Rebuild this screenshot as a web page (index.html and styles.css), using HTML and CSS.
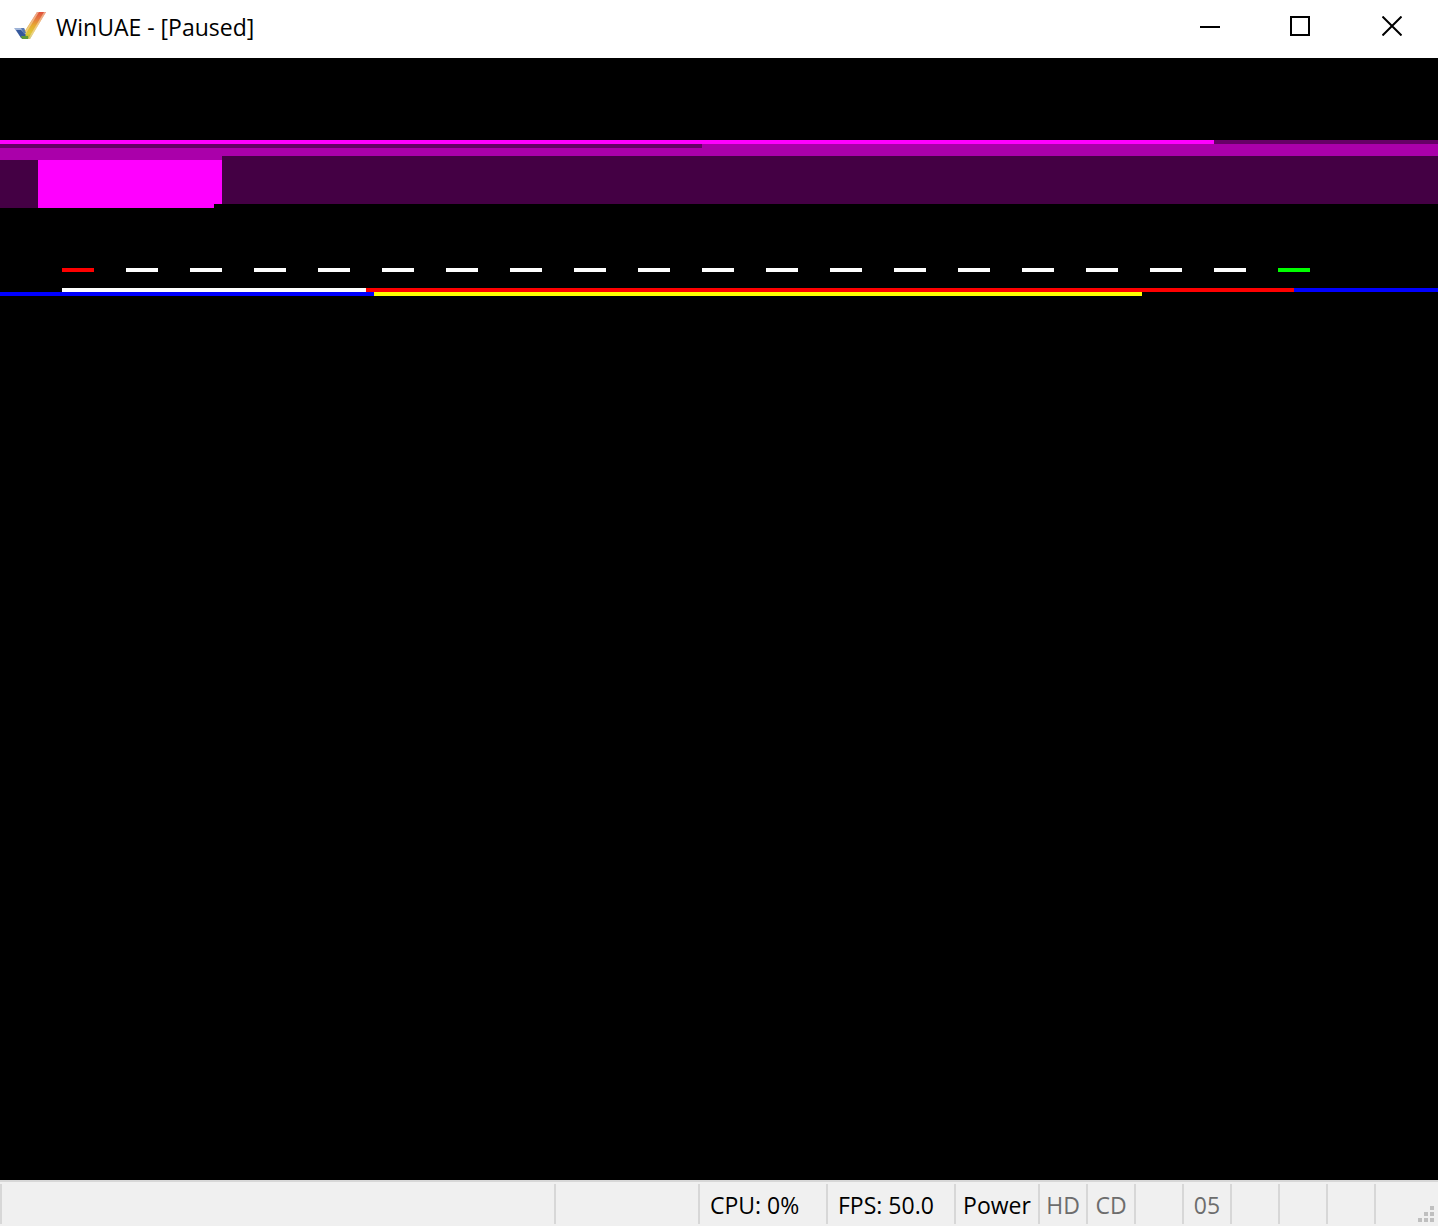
FILE: index.html
```html
<!DOCTYPE html>
<html lang="en">
<head>
<meta charset="utf-8">
<meta name="viewport" content="width=device-width, initial-scale=1">
<title>WinUAE - [Paused]</title>
<link rel="stylesheet" href="styles.css">
</head>
<body>
<div class="window">
  <header class="titlebar">
    <svg class="app-icon" width="32" height="32" viewBox="0 0 32 32" aria-hidden="true">
      <defs>
        <linearGradient id="arm" x1="0" y1="0" x2="0" y2="1">
          <stop offset="0" stop-color="#e0503c"/>
          <stop offset=".25" stop-color="#e47840"/>
          <stop offset=".5" stop-color="#e6aa30"/>
          <stop offset=".8" stop-color="#dcc838"/>
          <stop offset="1" stop-color="#a8b030"/>
        </linearGradient>
      </defs>
      <path fill="#9db2d6" d="M0 17h10l3 5-5 6z"/>
      <path fill="url(#arm)" d="M23 1h9L16 28H9V23z"/>
      <path fill="#f6d9b4" fill-opacity=".6" d="M30 1h2L16 28h-2zM23 1h2L11 24H9z"/>
      <path fill="#35589c" d="M2 19h5l5 5-3 3H7z"/>
      <path fill="#5878b0" d="M7 17h3l2 5-2 1z"/>
      <path fill="#5d9a38" d="M7 25h7v3H8z"/>
    </svg>
    <h1 class="title">WinUAE - [Paused]</h1>
    <div class="controls">
      <button class="control" type="button" aria-label="Minimize">
        <svg width="24" height="20" viewBox="0 0 24 20"><path fill="currentColor" d="M4 10h20v2H4z"/></svg>
      </button>
      <button class="control" type="button" aria-label="Maximize">
        <svg width="20" height="20" viewBox="0 0 20 20"><path fill="none" stroke="currentColor" stroke-width="2" d="M1 1h18v18H1z"/></svg>
      </button>
      <button class="control" type="button" aria-label="Close">
        <svg width="20" height="20" viewBox="0 0 20 20"><path fill="none" stroke="currentColor" stroke-width="2" d="M.5 .5l19 19M19.5 .5l-19 19"/></svg>
      </button>
    </div>
  </header>

  <main class="screen">
    <svg class="raster" width="100%" height="240" shape-rendering="crispEdges" role="img" aria-label="Emulated display">
      <!-- Purple copper bands -->
      <rect y="82" width="100%" height="4" fill="#606"/>
      <rect y="82" width="1214" height="4" fill="#f0f"/>
      <rect y="86" width="100%" height="12" fill="#a0a"/>
      <rect y="86" width="702" height="4" fill="#606"/>
      <rect y="98" width="100%" height="48" fill="#404"/>
      <rect y="98" width="222" height="4" fill="#a0a"/>
      <rect y="102" width="38" height="48" fill="#404"/>
      <rect x="38" y="102" width="184" height="44" fill="#f0f"/>
      <rect x="38" y="146" width="176" height="4" fill="#f0f"/>
      <!-- Dashed marker line -->
      <rect x="62" y="210" width="32" height="4" fill="#f00"/>
      <path d="M126 212H1246" stroke="#fff" stroke-width="4" stroke-dasharray="32 32"/>
      <rect x="1278" y="210" width="32" height="4" fill="#0f0"/>
      <!-- Solid lines -->
      <rect x="1294" y="230" width="100%" height="4" fill="#00f"/>
      <rect x="62" y="230" width="304" height="4" fill="#fff"/>
      <rect x="366" y="230" width="928" height="4" fill="#f00"/>
      <rect y="234" width="374" height="4" fill="#00f"/>
      <rect x="374" y="234" width="768" height="4" fill="#ff0"/>
    </svg>
  </main>

  <footer class="statusbar">
    <span class="cell"></span>
    <span class="cell"></span>
    <span class="cell cell-wide">CPU: 0%</span>
    <span class="cell cell-wide">FPS: 50.0</span>
    <span class="cell cell-center">Power</span>
    <span class="cell cell-center cell-off">HD</span>
    <span class="cell cell-center cell-off">CD</span>
    <span class="cell"></span>
    <span class="cell cell-center cell-off">05</span>
    <span class="cell"></span>
    <span class="cell"></span>
    <span class="cell"></span>
    <span class="cell cell-grip">
      <svg width="16" height="16" viewBox="0 0 16 16" fill="#bfbfbf" aria-hidden="true">
        <path d="M12 0h4v4h-4zM6 6h4v4H6zM12 6h4v4h-4zM0 12h4v4H0zM6 12h4v4H6zM12 12h4v4h-4z"/>
      </svg>
    </span>
  </footer>
</div>
</body>
</html>
```
FILE: styles.css
```css
* {
  box-sizing: border-box;
}

body {
  margin: 0;
  font-family: "Open Sans", "Noto Sans", sans-serif;
  font-size: 23px;
  color: #000;
}

.window {
  display: flex;
  flex-direction: column;
  min-height: 100vh;
}

.titlebar {
  display: flex;
  align-items: center;
  height: 58px;
  padding-left: 14px;
  padding-bottom: 4px;
  background: #fff;
}

.app-icon {
  flex: none;
}

.title {
  flex: 1;
  margin: 0;
  padding-left: 10px;
  font-size: 23px;
  font-weight: 400;
  line-height: 32px;
  white-space: nowrap;
}

.controls {
  display: flex;
  align-self: stretch;
}

.control {
  display: flex;
  align-items: center;
  justify-content: center;
  width: 92px;
  padding: 0 0 2px;
  border: 0;
  background: transparent;
  color: #000;
}

.screen {
  flex: 1;
  background: #000;
}

.raster {
  display: block;
}

.statusbar {
  display: grid;
  grid-template-columns: 1fr 144px 128px 128px 84px repeat(7, 48px) 64px;
  height: 46px;
  padding: 2px 0;
  border-top: 2px solid #d7d7d7;
  background: #f0f0f0;
}

.cell {
  display: flex;
  align-items: center;
  padding-top: 2px;
  border-left: 2px solid #d7d7d7;
  white-space: nowrap;
}

.cell-wide {
  padding-left: 10px;
}

.cell-center {
  justify-content: center;
}

.cell-off {
  color: #6d6d6d;
}

.cell-grip {
  align-items: flex-end;
  justify-content: flex-end;
  padding: 2px 4px;
}
```
